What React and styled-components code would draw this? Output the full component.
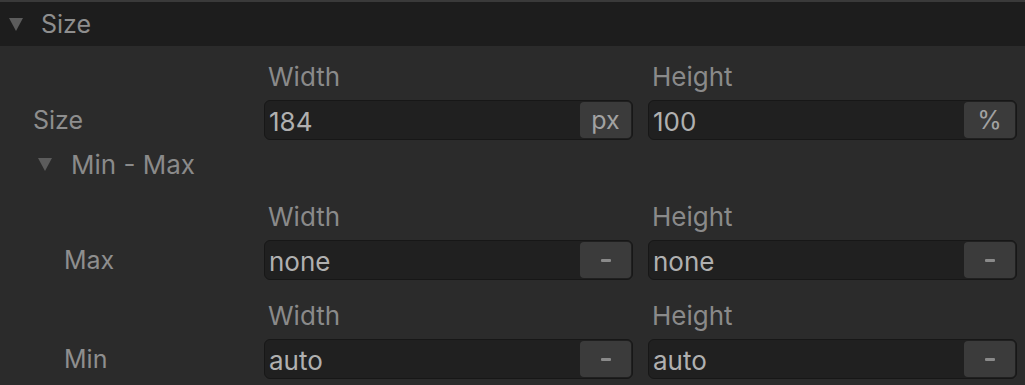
import styled, { createGlobalStyle } from "styled-components";

const GlobalStyle = createGlobalStyle`
  html, body {
    margin: 0;
    padding: 0;
    background: #2b2b2b;
  }
  body {
    font-family: Inter, "Noto Sans", "Liberation Sans", sans-serif;
    -webkit-font-smoothing: antialiased;
  }
`;

const Panel = styled.div`
  width: 1025px;
  height: 385px;
  background: #2b2b2b;
  border-top: 2px solid #3a3a3a;
  box-sizing: border-box;
  overflow: hidden;
`;

const Header = styled.div`
  height: 44px;
  display: flex;
  align-items: center;
  gap: 18px;
  padding-left: 9px;
  background: #1d1d1d;
  color: #8e8e8e;
  font-size: 25px;
`;

const Caret = styled.span`
  width: 0;
  height: 0;
  border-left: 7px solid transparent;
  border-right: 7px solid transparent;
  border-top: 13px solid #5c5c5c;
  margin-top: 1px;
`;

const Body = styled.div`
  display: flex;
  flex-direction: column;
  padding: 17px 8px 0 0;
`;

const Row = styled.div`
  display: grid;
  grid-template-columns: 249px 1fr 1fr;
  column-gap: 15px;
  margin-top: ${(p) => p.$top || 0}px;
`;

const RowLabel = styled.div`
  align-self: end;
  height: 40px;
  display: flex;
  align-items: center;
  padding-left: ${(p) => p.$indent}px;
  color: #8e8e8e;
  font-size: 25px;
`;

const Field = styled.div`
  display: flex;
  flex-direction: column;
  gap: 9px;
`;

const FieldLabel = styled.div`
  height: 28px;
  line-height: 28px;
  padding-left: 4px;
  color: #8a8a8a;
  font-size: 26px;
`;

const InputBox = styled.div`
  height: 40px;
  box-sizing: border-box;
  display: flex;
  align-items: stretch;
  background: #202020;
  border: 1px solid #171717;
  border-radius: 6px;
  overflow: hidden;
`;

const Value = styled.div`
  flex: 1;
  display: flex;
  align-items: center;
  padding-left: 4px;
  padding-top: 2px;
  color: #b0b0b0;
  font-size: 26px;
`;

const Unit = styled.div`
  width: 51px;
  margin: 1px 1px 1px 0;
  display: flex;
  align-items: center;
  justify-content: center;
  background: #3b3b3b;
  border-radius: 4px;
  color: #a2a2a2;
  font-size: 25px;
`;

const Dash = styled.span`
  width: 10px;
  height: 3px;
  border-radius: 1px;
  background: #8a8a8a;
`;

const SubHeader = styled.div`
  display: flex;
  align-items: center;
  gap: 19px;
  height: 28px;
  margin-top: 10px;
  padding-left: 38px;
  color: #8a8a8a;
  font-size: 26px;
`;

function Input({ value, unit }) {
  return (
    <InputBox>
      <Value>{value}</Value>
      <Unit>{unit === "-" ? <Dash /> : unit}</Unit>
    </InputBox>
  );
}

function SizeRow({ label, indent, top, width, height }) {
  return (
    <Row $top={top}>
      <RowLabel $indent={indent}>{label}</RowLabel>
      <Field>
        <FieldLabel>Width</FieldLabel>
        <Input value={width[0]} unit={width[1]} />
      </Field>
      <Field>
        <FieldLabel>Height</FieldLabel>
        <Input value={height[0]} unit={height[1]} />
      </Field>
    </Row>
  );
}

export default function App() {
  return (
    <Panel>
      <GlobalStyle />
      <Header>
        <Caret />
        Size
      </Header>
      <Body>
        <SizeRow label="Size" indent={33} width={["184", "px"]} height={["100", "%"]} />
        <SubHeader>
          <Caret />
          Min - Max
        </SubHeader>
        <SizeRow label="Max" indent={64} top={25} width={["none", "-"]} height={["none", "-"]} />
        <SizeRow label="Min" indent={64} top={22} width={["auto", "-"]} height={["auto", "-"]} />
      </Body>
    </Panel>
  );
}
